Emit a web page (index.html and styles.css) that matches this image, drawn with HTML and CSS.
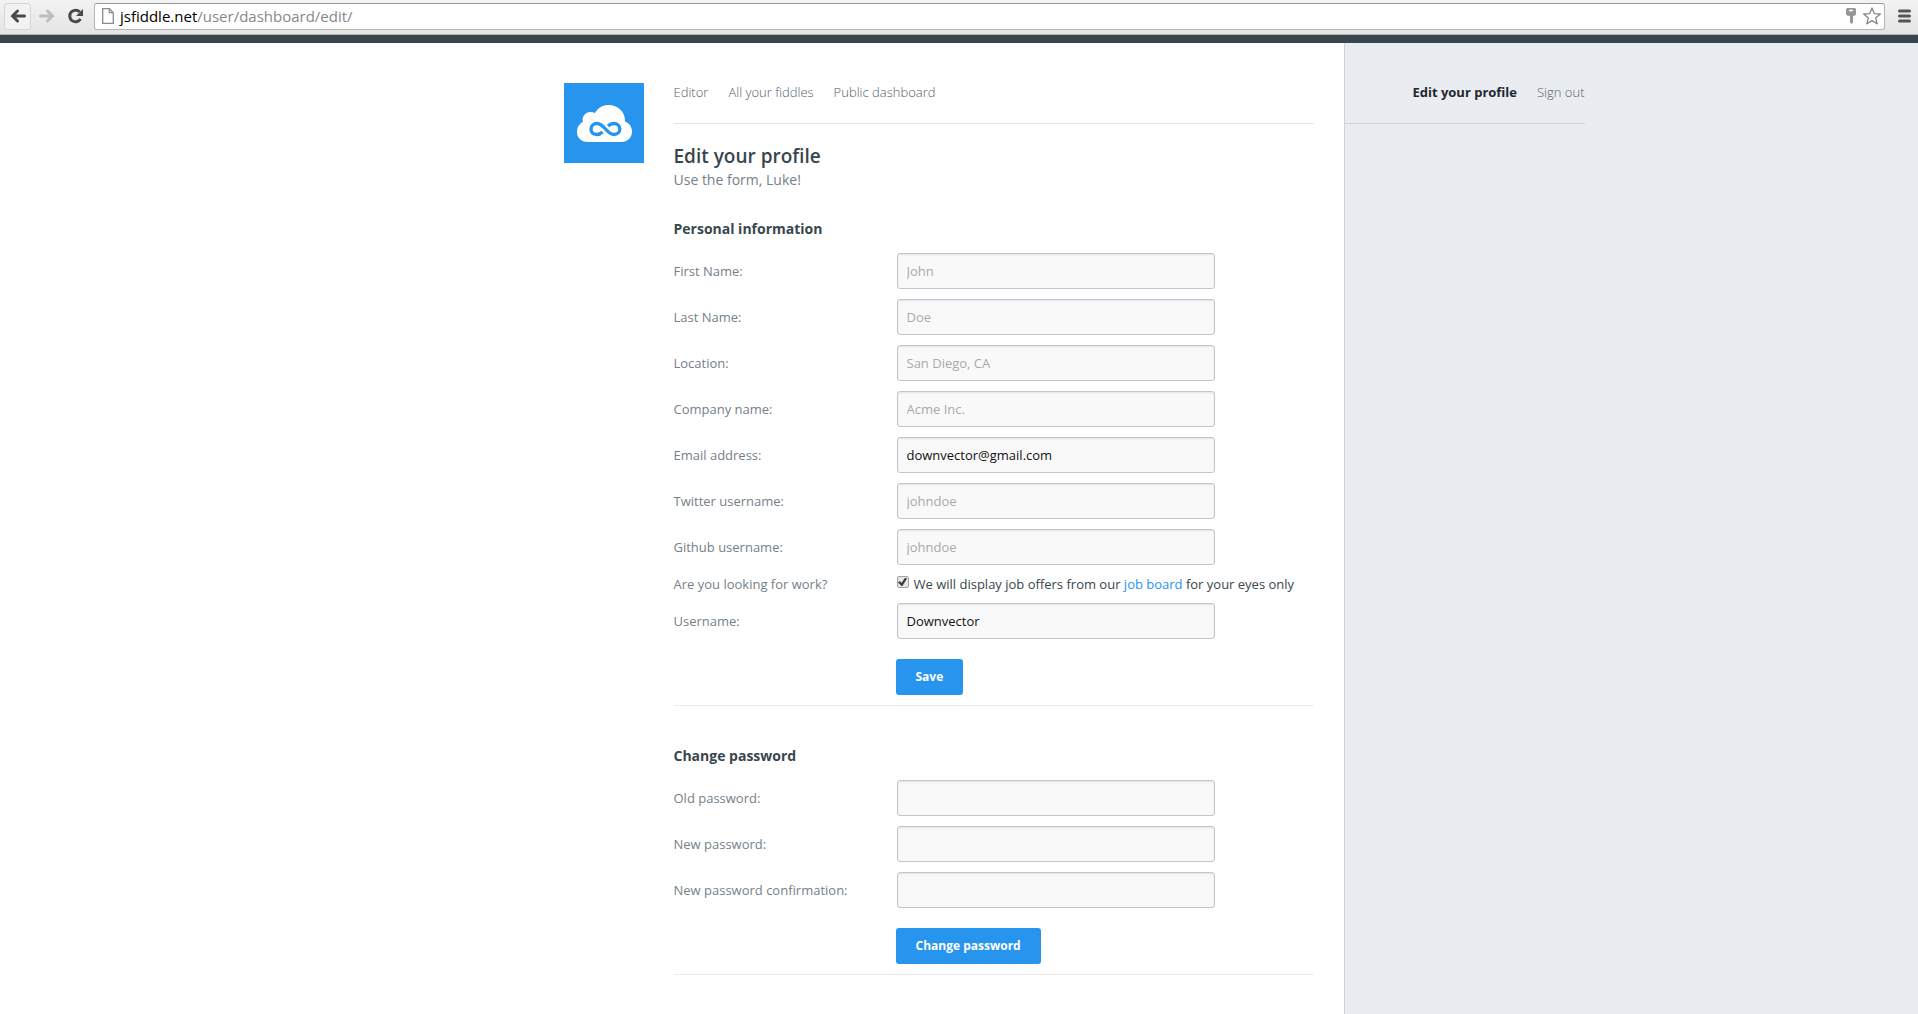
FILE: index.html
```html
<!DOCTYPE html>
<html lang="en">
<head>
<meta charset="utf-8">
<meta name="viewport" content="width=device-width, initial-scale=1">
<title>Edit your profile</title>
<link rel="stylesheet" href="styles.css">
</head>
<body>
<div class="browser">
  <button type="button" class="tool tool-active" aria-label="Back">
    <svg width="18" height="16" viewBox="0 0 18 16"><path d="M3.500 8H15.500M8.500 3L3.500 8l5 5" fill="none" stroke="#494949" stroke-width="3" stroke-linecap="round"/></svg>
  </button>
  <button type="button" class="tool" aria-label="Forward">
    <svg width="18" height="16" viewBox="0 0 18 16"><path d="M14.500 8H2.500M9.500 3l5 5-5 5" fill="none" stroke="#bdbdbd" stroke-width="3" stroke-linecap="round"/></svg>
  </button>
  <button type="button" class="tool" aria-label="Reload">
    <svg width="18" height="16" viewBox="0 0 18 16"><path d="M13.500 11A5.800 5.800 0 1 1 12.800 4" fill="none" stroke="#494949" stroke-width="3"/><path d="M16 1v7H9z" fill="#494949"/></svg>
  </button>
  <div class="address">
    <svg width="12" height="16" viewBox="0 0 12 16"><path d="M.7.700h6.600l4 4v10.600H.7zM7.300.700v4h4" fill="#fff" stroke="#8b8b8b" stroke-width="1.300"/></svg>
    <div class="url" role="textbox" aria-label="Address" contenteditable="true" spellcheck="false"><span class="host">jsfiddle.net</span>/user/dashboard/edit/</div>
    <svg width="12" height="16" viewBox="0 0 12 16"><path d="M2.500 0h7Q11 0 11 1.500v4Q11 8 8 8v6.500L6.500 16 5 14.500V8Q1 8 1 5.500v-4Q1 0 2.500 0z" fill="#969696"/><path d="M4 2.500h4" stroke="#fff" stroke-width="1.500"/></svg>
    <svg width="18" height="18" viewBox="0 0 18 18"><path d="M9 1l2.300 5.600 6 .4-4.600 3.900 1.500 5.900L9 13.600l-5.200 3.200 1.500-5.900L.7 7l6-.4z" fill="#fff" stroke="#858585" stroke-width="1.300" stroke-linejoin="round"/></svg>
  </div>
  <button type="button" class="tool tool-menu" aria-label="Menu">
    <svg width="13" height="14" viewBox="0 0 13 14"><path d="M1.500 2h10M1.500 7h10M1.500 12h10" stroke="#555" stroke-width="3" stroke-linecap="round"/></svg>
  </button>
</div>

<div class="layout">
  <main class="main">
    <a class="logo" href="#" aria-label="JSFiddle">
      <svg viewBox="0 0 80 80">
        <path d="M24 59C17 59 13 54.500 13 49C13 44 15.500 41 19 38.800C17 32 24 26.500 31 30C34 24.500 39 22 44.500 22C54 22 61.500 29 61 38.500C65.500 40.500 68 44 68 48.500C68 54.500 63.500 59 57.500 59z" fill="#fff"/>
        <path d="M38.500 49C36.500 51 34.500 51.500 32.500 51.500C29 51.500 27 49 27 46S29.300 40.500 33 40.500C40.500 40.500 42.500 51.500 50 51.500C53.500 51.500 55.800 49 55.800 46S53.500 40.500 50 40.500C48 40.500 46 41 44 43" fill="none" stroke="#2795ee" stroke-width="3.400"/>
      </svg>
    </a>
    <div class="content">
      <nav class="nav">
        <a href="#">Editor</a>
        <a href="#">All your fiddles</a>
        <a href="#">Public dashboard</a>
      </nav>
      <h1>Edit your profile</h1>
      <p class="lead">Use the form, Luke!</p>

      <form class="form">
        <h2>Personal information</h2>
        <div class="row"><label for="first">First Name:</label><input class="field" id="first" type="text" placeholder="John"></div>
        <div class="row"><label for="last">Last Name:</label><input class="field" id="last" type="text" placeholder="Doe"></div>
        <div class="row"><label for="location">Location:</label><input class="field" id="location" type="text" placeholder="San Diego, CA"></div>
        <div class="row"><label for="company">Company name:</label><input class="field" id="company" type="text" placeholder="Acme Inc."></div>
        <div class="row"><label for="email">Email address:</label><input class="field" id="email" type="email" value="downvector@gmail.com"></div>
        <div class="row"><label for="twitter">Twitter username:</label><input class="field" id="twitter" type="text" placeholder="johndoe"></div>
        <div class="row"><label for="github">Github username:</label><input class="field" id="github" type="text" placeholder="johndoe"></div>
        <div class="row">
          <label for="work">Are you looking for work?</label>
          <div class="check"><input id="work" type="checkbox" checked><span>We will display job offers from our <a href="#">job board</a> for your eyes only</span></div>
        </div>
        <div class="row"><label for="username">Username:</label><input class="field" id="username" type="text" value="Downvector"></div>
        <div class="actions"><button type="submit" class="button">Save</button></div>
      </form>

      <form class="form">
        <h2>Change password</h2>
        <div class="row"><label for="old">Old password:</label><input class="field" id="old" type="password"></div>
        <div class="row"><label for="new">New password:</label><input class="field" id="new" type="password"></div>
        <div class="row"><label for="confirm">New password confirmation:</label><input class="field" id="confirm" type="password"></div>
        <div class="actions"><button type="submit" class="button">Change password</button></div>
      </form>
    </div>
  </main>
  <aside class="side">
    <nav class="nav nav-user">
      <a class="current" href="#">Edit your profile</a>
      <a href="#">Sign out</a>
    </nav>
  </aside>
</div>
</body>
</html>
```
FILE: styles.css
```css
* {
  box-sizing: border-box;
}

body {
  display: flex;
  flex-direction: column;
  min-height: 100vh;
  margin: 0;
  background: #fff;
  color: #39464e;
  font: 13px/18px "Open Sans", "Noto Sans", sans-serif;
}

a {
  color: #2795ee;
  text-decoration: none;
}

svg {
  display: block;
  flex: none;
}

/* Browser toolbar */
.browser {
  display: flex;
  align-items: center;
  gap: 2px;
  height: 35px;
  padding: 0 0 2px 4px;
  border-bottom: 1px solid #b4b4b4;
  background: linear-gradient(#f3f3f3, #e4e4e4);
}

.tool {
  display: grid;
  place-items: center;
  width: 27px;
  height: 27px;
  padding: 0;
  border: 1px solid transparent;
  border-radius: 3px;
  background: none;
}

.tool-active {
  border-color: #d5d5d5;
  background: #f2f2f2;
}

.tool-menu {
  margin-left: 4px;
}

.address {
  display: flex;
  flex: 1;
  align-items: center;
  gap: 6px;
  height: 27px;
  margin-left: 3px;
  padding: 0 3px 0 7px;
  border: 1px solid #b5b5b5;
  border-top-color: #999;
  border-radius: 3px;
  background: #fff;
}

.url {
  flex: 1;
  color: #888;
  font-size: 15px;
  line-height: 20px;
  outline: none;
}

.host {
  color: #000;
}

/* Page columns: the side panel runs to the window's right edge */
.layout {
  display: grid;
  flex: 1;
  grid-template-columns: minmax(0, 1fr) 1010px 241px minmax(0, 1fr);
  border-top: 8px solid #39464e;
}

.main {
  display: flex;
  grid-column: 2;
  gap: 30px;
  padding: 40px 30px 39px 230px;
}

.side {
  grid-column: 3 / -1;
  padding-top: 40px;
  border-left: 1px solid #cfd4db;
  background: #e9edf2;
}

.logo {
  flex: none;
  width: 80px;
  height: 80px;
  background: #2795ee;
}

.content {
  flex: 1;
}

.nav {
  display: flex;
  gap: 20px;
  padding-bottom: 22px;
  border-bottom: 1px solid #e3e5e8;
}

.nav a {
  color: #56606a;
  font-weight: 300;
}

.nav-user {
  justify-content: flex-end;
  width: 240px;
  border-color: #cfd4db;
}

.nav .current {
  color: #22282d;
  font-weight: 700;
}

h1 {
  margin: 20px 0 0;
  font-size: 19px;
  font-weight: 600;
  line-height: 24px;
}

.lead {
  margin: 2px 0 0;
  color: #757f8a;
  font-size: 14px;
  line-height: 20px;
}

/* Forms */
.form {
  display: flex;
  flex-direction: column;
  gap: 10px;
  padding-bottom: 10px;
  border-bottom: 1px solid #e9eaec;
}

.lead + .form {
  margin-top: 29px;
}

.form + .form {
  margin-top: 40px;
}

h2 {
  margin: 0 0 4px;
  font-size: 14px;
  font-weight: 700;
  line-height: 20px;
}

.row {
  display: grid;
  grid-template-columns: 222px 1fr;
  align-items: center;
}

.row label {
  color: #757f8a;
}

.field {
  width: 318px;
  height: 36px;
  margin: 0 1px;
  padding: 0 9px;
  border: 1px solid #c3c7cd;
  border-radius: 3px;
  background: #f9f9f9;
  box-shadow: inset 0 1px 2px #dfe3e8;
  color: #111;
  font: inherit;
}

.field::placeholder {
  color: #a9a9a9;
}

.check {
  display: flex;
  gap: 5px;
  padding-left: 1px;
}

.check input {
  appearance: none;
  display: grid;
  place-items: center;
  width: 12px;
  height: 12px;
  margin: 1px 0 0;
  border: 1px solid #a3a3a3;
  border-radius: 2px;
  background: #e6e6e6;
}

.check input:checked::before {
  content: "";
  width: 9px;
  height: 9px;
  background: #3b3b3b;
  clip-path: polygon(0 55%, 20% 40%, 40% 62%, 80% 0, 100% 15%, 45% 100%);
}

.actions {
  padding: 10px 0 0 222px;
}

.button {
  height: 36px;
  padding: 0 20px;
  border: 0;
  border-radius: 3px;
  background: #2795ee;
  color: #fff;
  font: 700 12px/18px "Open Sans", "Noto Sans", sans-serif;
}
```
